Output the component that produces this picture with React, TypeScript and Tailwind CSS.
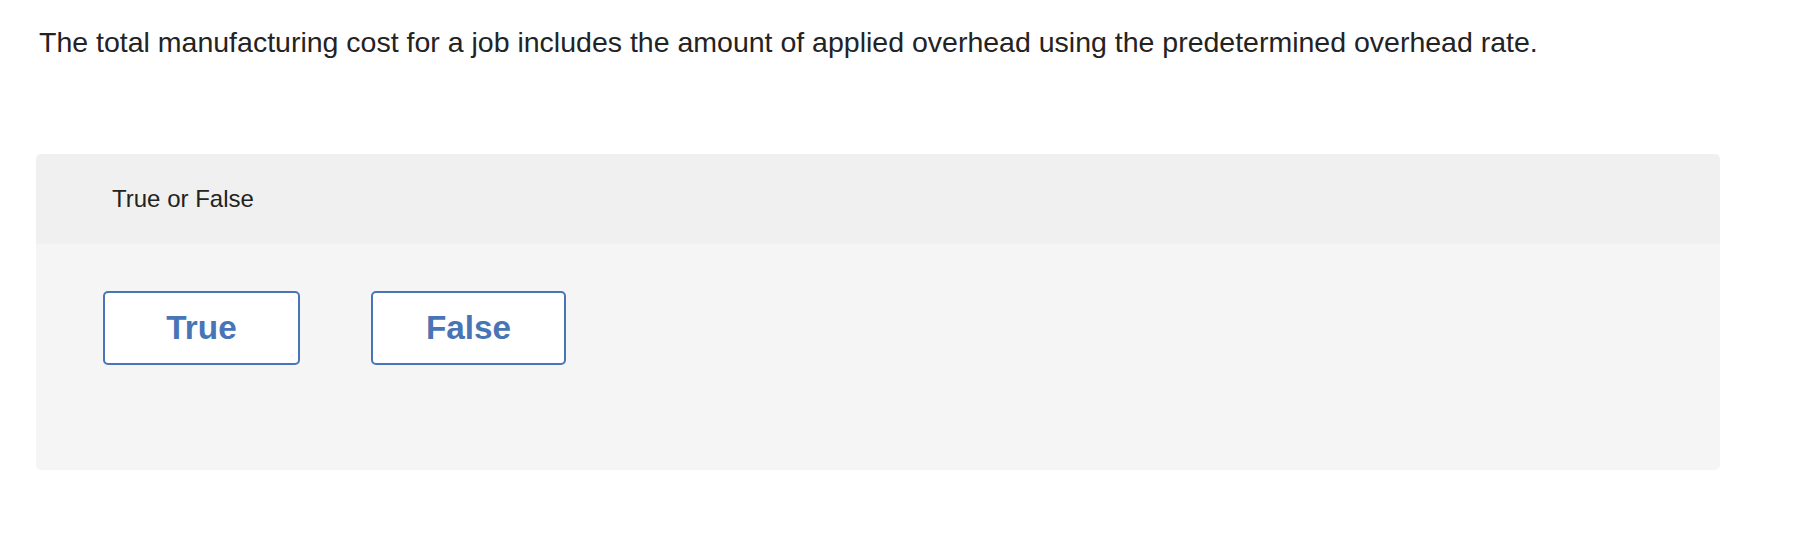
const choices = [
  { label: "True", width: "w-[197px]" },
  { label: "False", width: "w-[195px]" },
];

export default function App() {
  return (
    <div className="min-h-screen bg-white px-[36px] font-['Liberation_Sans',Arial,sans-serif] text-[#232323]">
      {/* Question prompt */}
      <p className="pt-[26px] pl-[3px] text-[28.5px] leading-[32px]">
        The total manufacturing cost for a job includes the amount of applied overhead using the predetermined overhead
        rate.
      </p>

      {/* Answer panel */}
      <div className="mt-[96px] w-[1684px] overflow-hidden rounded-[5px]">
        <div className="flex h-[90px] items-center bg-[#f0f0f0] pl-[76px]">
          <span className="text-[24px]">True or False</span>
        </div>
        <div className="flex h-[226px] items-start gap-[71px] bg-[#f5f5f5] pl-[67px] pt-[47px]">
          {choices.map((c) => (
            <button
              key={c.label}
              type="button"
              className={`flex h-[74px] ${c.width} items-center justify-center rounded-[5px] border-2 border-[#4775b6] bg-white text-[33.3px] font-bold text-[#4775b6]`}
            >
              {c.label}
            </button>
          ))}
        </div>
      </div>
    </div>
  );
}
